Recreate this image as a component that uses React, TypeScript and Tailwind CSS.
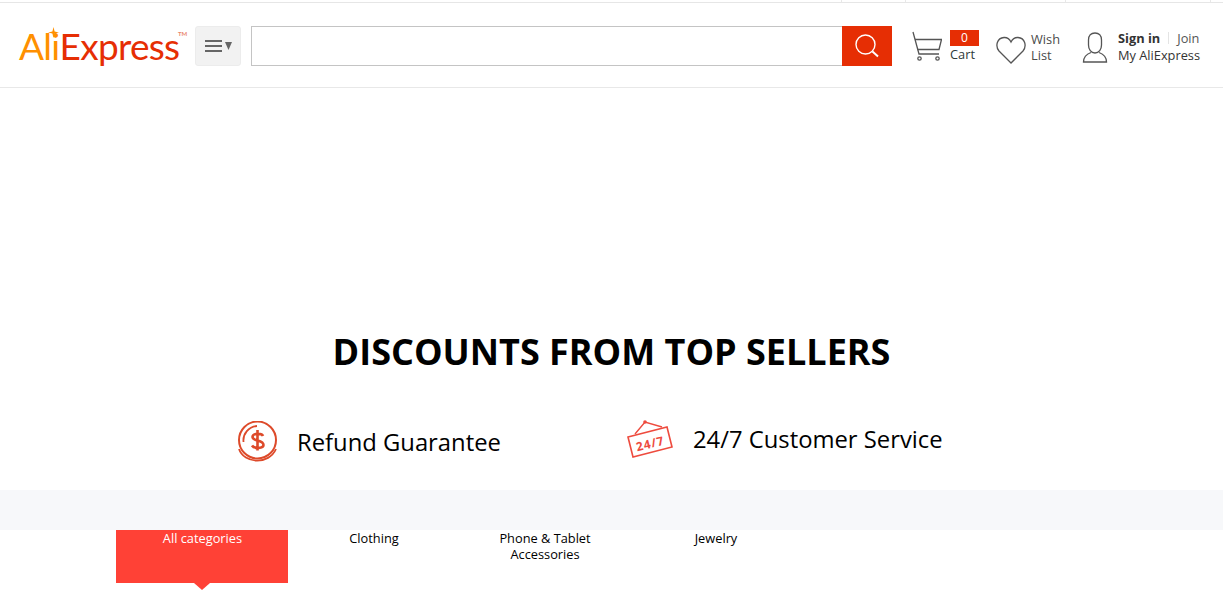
// AliExpress landing page header + promo strip
import { ReactNode } from 'react';

const sans = { fontFamily: '"Open Sans", sans-serif' };

function Logo() {
  return (
    <div className="relative w-[168px] h-[48px] mb-[2px] shrink-0 flex items-center font-['Lato',sans-serif] font-normal text-[37px] leading-none tracking-[-0.7px]">
      <span className="text-[#ff9000]">Ali</span>
      <span className="text-[#e62e04]">Express</span>
      <svg className="absolute left-[29px] top-[6px]" width="11" height="11" viewBox="0 0 12 12">
        <path d="M6 0 L7.2 4.8 L12 6 L7.2 7.2 L6 12 L4.8 7.2 L0 6 L4.8 4.8 Z" fill="#ff9000" />
      </svg>
      <span className="absolute left-[159px] top-[10px] text-[6px] font-bold tracking-normal text-[#e9866d]">TM</span>
    </div>
  );
}

function CartIcon() {
  return (
    <svg width="30" height="30" viewBox="0 0 30 30" fill="none" stroke="#555" strokeWidth="1.3">
      <path d="M1 1 L7 23 H27" />
      <path d="M3 8.5 H29.5 L27 18.5 H5.5" />
      <circle cx="7.5" cy="27.5" r="1.7" />
      <circle cx="25.5" cy="27.5" r="1.7" />
    </svg>
  );
}

function HeartIcon() {
  return (
    <svg width="30" height="28" viewBox="0 0 30 28" fill="none" stroke="#555" strokeWidth="1.3">
      <path d="M15 27 L3 15 C-1 10 1 2 8 1.5 C11 1.3 13.5 3 15 6 C16.5 3 19 1.3 22 1.5 C29 2 31 10 27 15 Z" />
    </svg>
  );
}

function UserIcon() {
  return (
    <svg width="26" height="31" viewBox="0 0 26 31" fill="none" stroke="#555" strokeWidth="1.3">
      <path d="M13 1 C9 1 6.5 3.5 6.5 8 V13 C6.5 17.5 9 21 13 21 C17 21 19.5 17.5 19.5 13 V8 C19.5 3.5 17 1 13 1 Z" />
      <path d="M9 20.5 C5 22 1.5 25 1.5 30 H24.5 C24.5 25 21 22 17 20.5" />
    </svg>
  );
}

function Feature({ icon, label, className }: { icon: ReactNode; label: string; className: string }) {
  return (
    <div className={`flex items-center ${className}`}>
      {icon}
      <span className="text-[23.8px] leading-8 text-black">{label}</span>
    </div>
  );
}

const tabs = [
  { label: 'All categories', active: true },
  { label: 'Clothing' },
  { label: 'Phone & Tablet Accessories' },
  { label: 'Jewelry' },
];

export default function App() {
  return (
    <div className="min-h-[609px] bg-white overflow-hidden" style={sans}>
      {/* Top strip */}
      <div className="h-[3px] border-b border-[#e6e6e6] flex">
        <div className="w-[841px]" />
        <div className="w-[64px] border-l border-[#e8e8e8]" />
        <div className="w-[160px] border-l border-[#e8e8e8]" />
        <div className="w-[145px] border-l border-[#e8e8e8]" />
        <div className="border-l border-[#e8e8e8]" />
      </div>

      {/* Header */}
      <div className="h-[85px] border-b border-[#e8e8e8] flex items-center pl-[19px] pt-[2px]">
        <Logo />
        <button className="ml-[8px] w-[46px] h-[40px] rounded-[3px] bg-[#f2f2f2] border border-[#ececec] flex items-center justify-center gap-[3px]">
          <span className="flex flex-col gap-[3px] w-[17px]">
            <span className="h-[2px] bg-[#666]" />
            <span className="h-[2px] bg-[#666]" />
            <span className="h-[2px] bg-[#666]" />
          </span>
          <svg width="7" height="8" viewBox="0 0 7 8"><path d="M0 0 H7 L3.5 8 Z" fill="#666" /></svg>
        </button>
        <div className="ml-[10px] flex h-[40px] w-[641px]">
          <input className="flex-1 min-w-0 border border-r-0 border-[#c4c4c4] bg-white outline-none" />
          <div className="w-[50px] bg-[#e62e04] flex items-center justify-center">
            <svg width="24" height="24" viewBox="0 0 24 24" fill="none" stroke="#fff">
              <circle cx="10.5" cy="10.5" r="9.5" strokeWidth="1.4" />
              <path d="M17.5 17.5 L23 22.5" strokeWidth="2" />
            </svg>
          </div>
        </div>

        <div className="ml-[20px] w-[30px] shrink-0"><CartIcon /></div>
        <div className="ml-[8px] w-[29px] flex flex-col text-[12.8px] leading-4">
          <span className="h-[16px] bg-[#e62e04] text-white text-center text-[12px]">0</span>
          <span className="w-[40px] text-[#2d3a3a]">Cart</span>
        </div>

        <div className="ml-[17px] mt-[7px]"><HeartIcon /></div>
        <div className="ml-[5px] flex flex-col text-[12.8px] leading-4 text-[#4a4a4a] mt-[1px]">
          <span>Wish</span>
          <span>List</span>
        </div>

        <div className="ml-[22px] mt-[3px]"><UserIcon /></div>
        <div className="ml-[10px] flex flex-col text-[12.8px] leading-4 text-[#333] mt-[0px]">
          <div className="flex items-center">
            <span className="font-bold">Sign in</span>
            <span className="ml-[8px] h-[12px] border-l border-[#e4e4e4]" />
            <span className="ml-[8px] text-[#555]">Join</span>
          </div>
          <span className="whitespace-nowrap mt-[1px]">My AliExpress</span>
        </div>
      </div>

      {/* Promo */}
      <h1 className="mt-[240px] text-center text-[36px] leading-[48px] font-bold text-black">
        DISCOUNTS FROM TOP SELLERS
      </h1>

      <div className="mt-[41px] h-[74px] flex items-start">
        <Feature
          className="ml-[237px] w-[390px] pt-[4px]"
          label="Refund Guarantee"
          icon={
            <svg className="mr-[19px]" width="41" height="42" viewBox="0 0 41 42" fill="none" stroke="#dd4a2a">
              <circle cx="20.5" cy="19" r="18.5" strokeWidth="2" />
              <path d="M6.5 21 A14.5 14.5 0 0 1 20 5" strokeWidth="1.8" />
              <path d="M2 28 C7 43 32 44 39 28" strokeWidth="1.8" />
              <path d="M26 15 C25 12 15.5 12 15.5 16 C15.5 20.5 26.5 18.5 26.5 24 C26.5 27.5 17 28 15 24.5 M20.5 9 V29.5" strokeWidth="2.6" />
            </svg>
          }
        />
        <Feature
          className="pt-[3px]"
          label="24/7 Customer Service"
          icon={
            <svg className="mr-[20px]" width="46" height="38" viewBox="0 0 46 38" fill="none" stroke="#ee4b3e">
              <path d="M1 17 L40 7 L45 27 L6 37 Z" strokeWidth="1.6" />
              <path d="M8 14 L18 2 L35 7" strokeWidth="1.4" />
              <circle cx="18" cy="2" r="1.8" fill="#ee4b3e" stroke="none" />
              <text x="23" y="28" textAnchor="middle" letterSpacing="0.8" transform="rotate(-14 23 23)" fontSize="12" fontWeight="700" fill="#ee4b3e" stroke="none" fontFamily="Open Sans, sans-serif">24/7</text>
            </svg>
          }
        />
      </div>

      <div className="mt-[-1px] h-[40px] bg-[#f7f8fa]" />

      {/* Category tabs */}
      <div className="pl-[116px] flex">
        {tabs.map((tab) => (
          <div
            key={tab.label}
            className={`relative h-[53px] text-center text-[12.8px] leading-4 pl-[1px] ${
              tab.active ? 'bg-[#ff4136] text-[#fff] w-[172px]' : 'text-black w-[171px]'
            }`}
          >
            <span className="block mx-auto w-[120px]">{tab.label}</span>
            {tab.active && (
              <span className="absolute left-[78px] top-[53px] border-x-[8px] border-x-transparent border-t-[7px] border-t-[#ff4136]" />
            )}
          </div>
        ))}
      </div>
    </div>
  );
}
